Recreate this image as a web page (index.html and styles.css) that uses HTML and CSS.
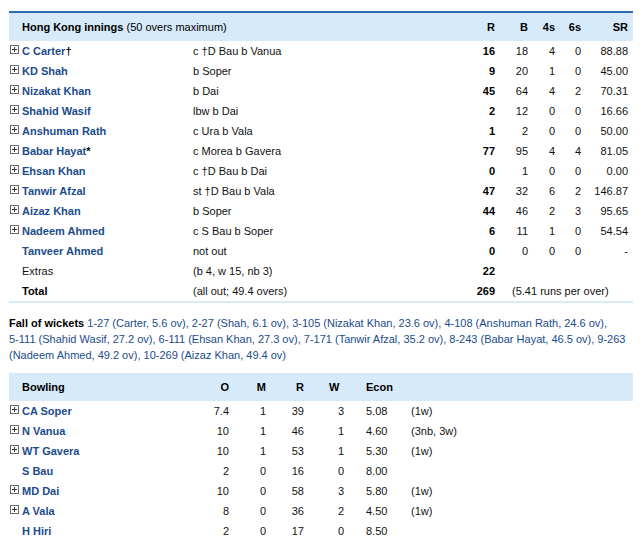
FILE: index.html
```html
<!DOCTYPE html>
<html>
<head>
<meta charset="utf-8">
<link rel="stylesheet" href="styles.css">
</head>
<body>
<table class="card bat">
  <colgroup>
    <col class="c-icon"><col class="c-name"><col class="c-dis"><col class="c-r"><col class="c-b"><col class="c-4s"><col class="c-6s"><col class="c-sr">
  </colgroup>
  <thead>
    <tr>
      <th></th>
      <th colspan="2" class="left">Hong Kong innings <span class="light">(50 overs maximum)</span></th>
      <th class="num">R</th><th class="num">B</th><th class="num">4s</th><th class="num">6s</th><th class="num sr">SR</th>
    </tr>
  </thead>
  <tbody>
    <tr><td class="icon"><span class="plus"></span></td><td class="name">C Carter<span class="mark">†</span></td><td>c †D Bau b Vanua</td><td class="num runs">16</td><td class="num">18</td><td class="num">4</td><td class="num">0</td><td class="num sr">88.88</td></tr>
    <tr><td class="icon"><span class="plus"></span></td><td class="name">KD Shah</td><td>b Soper</td><td class="num runs">9</td><td class="num">20</td><td class="num">1</td><td class="num">0</td><td class="num sr">45.00</td></tr>
    <tr><td class="icon"><span class="plus"></span></td><td class="name">Nizakat Khan</td><td>b Dai</td><td class="num runs">45</td><td class="num">64</td><td class="num">4</td><td class="num">2</td><td class="num sr">70.31</td></tr>
    <tr><td class="icon"><span class="plus"></span></td><td class="name">Shahid Wasif</td><td>lbw b Dai</td><td class="num runs">2</td><td class="num">12</td><td class="num">0</td><td class="num">0</td><td class="num sr">16.66</td></tr>
    <tr><td class="icon"><span class="plus"></span></td><td class="name">Anshuman Rath</td><td>c Ura b Vala</td><td class="num runs">1</td><td class="num">2</td><td class="num">0</td><td class="num">0</td><td class="num sr">50.00</td></tr>
    <tr><td class="icon"><span class="plus"></span></td><td class="name">Babar Hayat<span class="mark">*</span></td><td>c Morea b Gavera</td><td class="num runs">77</td><td class="num">95</td><td class="num">4</td><td class="num">4</td><td class="num sr">81.05</td></tr>
    <tr><td class="icon"><span class="plus"></span></td><td class="name">Ehsan Khan</td><td>c †D Bau b Dai</td><td class="num runs">0</td><td class="num">1</td><td class="num">0</td><td class="num">0</td><td class="num sr">0.00</td></tr>
    <tr><td class="icon"><span class="plus"></span></td><td class="name">Tanwir Afzal</td><td>st †D Bau b Vala</td><td class="num runs">47</td><td class="num">32</td><td class="num">6</td><td class="num">2</td><td class="num sr">146.87</td></tr>
    <tr><td class="icon"><span class="plus"></span></td><td class="name">Aizaz Khan</td><td>b Soper</td><td class="num runs">44</td><td class="num">46</td><td class="num">2</td><td class="num">3</td><td class="num sr">95.65</td></tr>
    <tr><td class="icon"><span class="plus"></span></td><td class="name">Nadeem Ahmed</td><td>c S Bau b Soper</td><td class="num runs">6</td><td class="num">11</td><td class="num">1</td><td class="num">0</td><td class="num sr">54.54</td></tr>
    <tr><td class="icon"></td><td class="name">Tanveer Ahmed</td><td>not out</td><td class="num runs">0</td><td class="num">0</td><td class="num">0</td><td class="num">0</td><td class="num sr">-</td></tr>
    <tr><td class="icon"></td><td>Extras</td><td>(b 4, w 15, nb 3)</td><td class="num runs">22</td><td colspan="4"></td></tr>
    <tr><td class="icon"></td><td class="strong">Total</td><td>(all out; 49.4 overs)</td><td class="num runs">269</td><td colspan="4" class="rate">(5.41 runs per over)</td></tr>
  </tbody>
</table>

<p class="fow"><b>Fall of wickets</b> <span class="nb">1-27</span> (Carter, 5.6 ov), <span class="nb">2-27</span> (Shah, 6.1 ov), <span class="nb">3-105</span> (Nizakat Khan, 23.6 ov), <span class="nb">4-108</span> (Anshuman Rath, 24.6 ov), <span class="nb">5-111</span> (Shahid Wasif, 27.2 ov), <span class="nb">6-111</span> (Ehsan Khan, 27.3 ov), <span class="nb">7-171</span> (Tanwir Afzal, 35.2 ov), <span class="nb">8-243</span> (Babar Hayat, 46.5 ov), <span class="nb">9-263</span> (Nadeem Ahmed, 49.2 ov), <span class="nb">10-269</span> (Aizaz Khan, 49.4 ov)</p>

<table class="card bowl">
  <colgroup>
    <col class="b-icon"><col class="b-name"><col class="b-o"><col class="b-m"><col class="b-r"><col class="b-w"><col class="b-econ"><col class="b-ext">
  </colgroup>
  <thead>
    <tr>
      <th></th><th class="left">Bowling</th><th class="num">O</th><th class="num">M</th><th class="num">R</th><th class="w">W</th><th class="econ">Econ</th><th></th>
    </tr>
  </thead>
  <tbody>
    <tr><td class="icon"><span class="plus"></span></td><td class="name">CA Soper</td><td class="num">7.4</td><td class="num">1</td><td class="num">39</td><td class="w">3</td><td class="econ">5.08</td><td>(1w)</td></tr>
    <tr><td class="icon"><span class="plus"></span></td><td class="name">N Vanua</td><td class="num">10</td><td class="num">1</td><td class="num">46</td><td class="w">1</td><td class="econ">4.60</td><td>(3nb, 3w)</td></tr>
    <tr><td class="icon"><span class="plus"></span></td><td class="name">WT Gavera</td><td class="num">10</td><td class="num">1</td><td class="num">53</td><td class="w">1</td><td class="econ">5.30</td><td>(1w)</td></tr>
    <tr><td class="icon"></td><td class="name">S Bau</td><td class="num">2</td><td class="num">0</td><td class="num">16</td><td class="w">0</td><td class="econ">8.00</td><td></td></tr>
    <tr><td class="icon"><span class="plus"></span></td><td class="name">MD Dai</td><td class="num">10</td><td class="num">0</td><td class="num">58</td><td class="w">3</td><td class="econ">5.80</td><td>(1w)</td></tr>
    <tr><td class="icon"><span class="plus"></span></td><td class="name">A Vala</td><td class="num">8</td><td class="num">0</td><td class="num">36</td><td class="w">2</td><td class="econ">4.50</td><td>(1w)</td></tr>
    <tr><td class="icon"></td><td class="name">H Hiri</td><td class="num">2</td><td class="num">0</td><td class="num">17</td><td class="w">0</td><td class="econ">8.50</td><td></td></tr>
  </tbody>
</table>
</body>
</html>
```

FILE: styles.css
```css
body {
  margin: 11px 9px 0;
  font-family: "Liberation Sans", Arial, sans-serif;
  font-size: 11px;
  color: #111;
  background: #fff;
}

.card {
  width: 624px;
  border-collapse: collapse;
  table-layout: fixed;
}

.card th,
.card td {
  padding: 0;
  line-height: 13px;
  vertical-align: middle;
  white-space: nowrap;
}

.card th {
  height: 28px;
  background: #d6eaf9;
  font-weight: bold;
  color: #000;
  text-align: left;
}

.card td {
  height: 20px;
}

.bat {
  border-top: 2px solid #2b6cb2;
  border-bottom: 2px solid #d6eaf9;
}

.c-icon { width: 13px; }
.c-name { width: 171px; }
.c-dis { width: 262px; }
.c-r { width: 40px; }
.c-b { width: 33px; }
.c-4s { width: 27px; }
.c-6s { width: 26px; }
.c-sr { width: 52px; }

.light { font-weight: normal; }

.num { text-align: right; }
.card th.num { text-align: right; }
.card .sr { padding-right: 5px; }
.runs { font-weight: bold; color: #000; }

.name {
  color: #1b4c8c;
  font-weight: bold;
}

.mark {
  color: #000;
  font-weight: bold;
}

.strong { font-weight: bold; color: #000; }

.card .rate { padding-left: 17px; }

.plus {
  display: block;
  position: relative;
  top: -2px;
  width: 7px;
  height: 7px;
  border: 1px solid #6a6a6a;
  margin-left: 1px;
}

.plus::before,
.plus::after {
  content: "";
  position: absolute;
  background: #333;
}

.plus::before {
  left: 1px;
  top: 3px;
  width: 5px;
  height: 1px;
}

.plus::after {
  left: 3px;
  top: 1px;
  width: 1px;
  height: 5px;
}

.fow {
  margin: 12px 0 10px;
  line-height: 16px;
  color: #1b4c8c;
}

.fow b { color: #000; }
.nb { white-space: nowrap; }

.b-icon { width: 13px; }
.b-name { width: 158px; }
.b-o { width: 49px; }
.b-m { width: 37px; }
.b-r { width: 38px; }
.b-w { width: 57px; }
.b-econ { width: 50px; }
.b-ext { width: 222px; }

.bowl th.w { padding-left: 25px; }
.bowl td.w { padding-left: 34px; }
.card .econ { padding-left: 5px; }
```
